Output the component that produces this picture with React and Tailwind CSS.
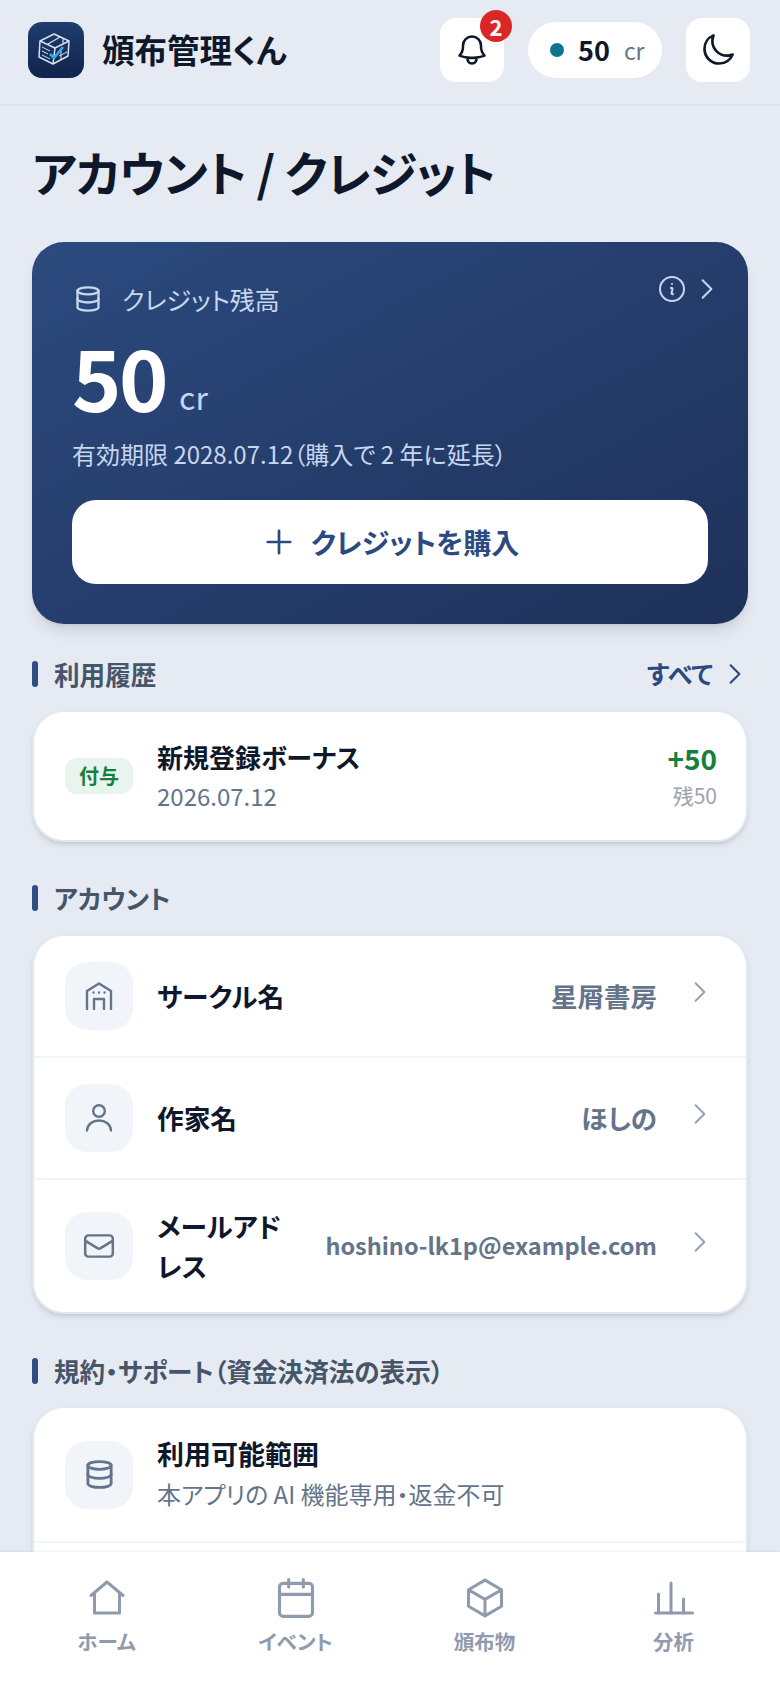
import React from "react";
import { Calendar, Database } from "lucide-react";
import {
  HiOutlineBell,
  HiOutlineMoon,
  HiOutlineInformationCircle,
  HiOutlineChevronRight,
  HiOutlinePlus,
  HiOutlineEnvelope,
  HiOutlineCube,
} from "react-icons/hi2";

const Logo = () => (
  <div className="w-14 h-14 rounded-[14px] bg-gradient-to-b from-[#1f3d6e] to-[#10244c] flex items-center justify-center shrink-0">
    <svg width="56" height="56" viewBox="0 0 56 56" fill="none" stroke="#d5e2f2" strokeWidth="1.5" strokeLinejoin="round">
      <path d="M12 19 L26 12 L41 19 L40 34 L25 42 L11 35 Z" />
      <path d="M12 19 L27 26 L41 19" />
      <path d="M27 26 L25 42" />
      <path d="M32 15 L20 22 M35 17 L35 21" strokeWidth="1.2" />
      <path d="M14 25 L22 29 M14 29 L20 32 M14 33 L22 37" strokeWidth="1" />
      <path d="M22 32 L26 36 L35 25" stroke="#38a9e8" strokeWidth="2.6" />
      <path d="M31 34 L39 30 M33 29 L33 38" strokeWidth="1" />
    </svg>
  </div>
);

const BuildingIcon = () => (
  <svg width="28" height="28" viewBox="0 0 28 28" fill="none" stroke="#64748b" strokeWidth="2.4" strokeLinecap="round" strokeLinejoin="round">
    <path d="M2 27 V9 L14 1.5 L26 9 V27" />
    <path d="M9 27 V17 H19 V27" />
    <path d="M8.5 10.5 h.01 M14 10.5 h.01 M19.5 10.5 h.01" />
  </svg>
);

const UserIcon = () => (
  <svg width="28" height="28" viewBox="0 0 28 28" fill="none" stroke="#64748b" strokeWidth="2.4" strokeLinecap="round">
    <circle cx="14" cy="7" r="5.8" />
    <path d="M2 26.5 C2.5 20 8 16.5 14 16.5 S25.5 20 26 26.5" />
  </svg>
);

const HomeIcon = () => (
  <svg width="36" height="36" viewBox="0 0 36 36" fill="none" stroke="#8f9bad" strokeWidth="3" strokeLinecap="round" strokeLinejoin="round">
    <path d="M2 15.5 L18 2 L34 15.5" />
    <path d="M5.5 13 V33 H30.5 V13" />
  </svg>
);

const ChartIcon = () => (
  <svg width="40" height="36" viewBox="0 0 40 36" fill="none" stroke="#8f9bad" strokeWidth="3" strokeLinecap="round">
    <path d="M1.5 33 H38.5" />
    <path d="M4.5 33 V14 M17 33 V3 M29.5 33 V19" />
  </svg>
);

const SectionTitle = ({ children, right }) => (
  <div className="flex items-center justify-between h-[26px]">
    <div className="flex items-center gap-4">
      <span className="w-[6px] h-[26px] rounded-full bg-[#2f4d80]" />
      <h2 className="text-[25.6px] leading-none font-bold text-[#475569]">{children}</h2>
    </div>
    {right}
  </div>
);

const SettingRow = ({ icon, label, value, small, last }) => (
  <div className={`flex items-center pl-[31px] pr-[32px] py-[26px] gap-6 ${last ? "" : "border-b-2 border-[#f1f5f9]"}`}>
    <div className="w-[68px] h-[68px] rounded-[22px] bg-[#f1f5f9] flex items-center justify-center shrink-0">{icon}</div>
    <span className="flex-1 min-w-0 text-[26.7px] leading-[40px] font-bold text-[#0f172a]">{label}</span>
    <span className={`${small ? "text-[23.5px]" : "text-[26.5px]"} font-semibold text-[#64748b] whitespace-nowrap`}>{value}</span>
    <HiOutlineChevronRight size={28} strokeWidth={1.7} className="text-[#94a3b8] -mt-2 shrink-0 ml-[5px]" />
  </div>
);

const NavItem = ({ icon, label }) => (
  <div className="flex flex-col items-center">
    <div className="h-[40px] flex items-center justify-center">{icon}</div>
    <span className="mt-2 text-[20.5px] leading-[30px] font-semibold text-[#8f9bad]">{label}</span>
  </div>
);

export default function App() {
  return (
    <div className="h-[1688px] flex flex-col overflow-hidden bg-[#e5eaf3] font-['Noto_Sans_CJK_JP','Noto_Sans',sans-serif] [font-feature-settings:'palt']">
      <header className="h-[106px] shrink-0 flex items-center justify-between pl-7 pr-[30px] pb-1 border-b-2 border-[#dde3ec]">
        <div className="flex items-center gap-[18px]">
          <Logo />
          <span className="text-[32.5px] font-bold text-[#0f172a] -mt-[2px]">頒布管理くん</span>
        </div>
        <div className="flex items-center gap-6">
          <div className="relative w-16 h-16 rounded-2xl bg-white flex items-center justify-center">
            <HiOutlineBell size={36} strokeWidth={1.7} className="text-[#0f172a]" />
            <span className="absolute -top-2 -right-2 w-8 h-8 rounded-full bg-[#dc2626] text-white text-[22px] leading-none font-bold flex items-center justify-center">2</span>
          </div>
          <div className="w-[134px] h-14 rounded-full bg-white flex items-center pl-[22px]">
            <span className="w-[14px] h-[14px] rounded-full bg-[#0e7490]" />
            <span className="ml-[14px] text-[27px] font-bold text-[#0f172a]">50</span>
            <span className="ml-[14px] text-[23px] text-[#64748b]">cr</span>
          </div>
          <div className="w-16 h-16 rounded-2xl bg-white flex items-center justify-center">
            <HiOutlineMoon size={36} strokeWidth={1.8} className="text-[#0f172a]" />
          </div>
        </div>
      </header>

      <main className="flex-1 overflow-hidden px-8">
        <h1 className="mt-[33px] text-[48px] leading-[64px] font-bold tracking-[-0.0175em] text-[#0f172a]">アカウント / クレジット</h1>

        <section className="relative mt-[39px] h-[382px] rounded-[32px] bg-gradient-to-br from-[#2c4a7f] to-[#1e3159] shadow-lg px-10 pt-[39px]">
          <div className="absolute top-[31px] right-[27px] flex items-center gap-[5px] text-[#c7d7ef]">
            <HiOutlineInformationCircle size={32} strokeWidth={1.5} />
            <HiOutlineChevronRight size={28} strokeWidth={1.7} />
          </div>
          <div className="flex items-center gap-5 text-[#c7d7ef]">
            <Database size={28} strokeWidth={2} className="ml-[2px]" />
            <span className="text-[25px] leading-[36px]">クレジット残高</span>
          </div>
          <div className="flex items-baseline mt-[9px]">
            <span className="text-[84px] leading-[100px] font-bold tracking-[-0.03em] text-white">50</span>
            <span className="ml-[13px] -translate-y-[2px] text-[32px] text-[#c7d7ef]">cr</span>
          </div>
          <p className="mt-[10px] text-[24px] leading-[36px] text-[#c7d7ef]">有効期限 2028.07.12（購入で 2 年に延長）</p>
          <button className="mt-7 w-full h-[84px] rounded-3xl bg-white flex items-center justify-center gap-[14px] text-[#2c4a7f] text-[28px] font-bold">
            <HiOutlinePlus size={36} strokeWidth={1.8} />
            クレジットを購入
          </button>
        </section>

        <div className="mt-[37px]">
          <SectionTitle right={
            <div className="flex items-center gap-2 text-[#2c4a7f] -mr-px">
              <span className="text-[25px] font-bold">すべて</span>
              <HiOutlineChevronRight size={28} strokeWidth={1.8} />
            </div>
          }>利用履歴</SectionTitle>
        </div>

        <div className="mt-[23px] h-[132px] rounded-[32px] bg-white border-2 border-[#e2e8f0] shadow-md flex items-center pl-[31px] pr-[29px]">
          <span className="w-[68px] h-[36px] rounded-xl bg-[#e8f5ee] flex items-center justify-center text-[20px] font-bold text-[#15803d]">付与</span>
          <div className="ml-6 flex-1 pb-[2px]">
            <p className="text-[26px] leading-[39px] font-bold text-[#0f172a]">新規登録ボーナス</p>
            <p className="mt-[2px] text-[24px] leading-[36px] text-[#64748b]">2026.07.12</p>
          </div>
          <div className="text-right pb-[3px]">
            <p className="text-[28px] leading-[40px] font-bold text-[#15803d]">+50</p>
            <p className="text-[21px] leading-[34px] text-[#9ca3af]">残50</p>
          </div>
        </div>

        <div className="mt-[43px]">
          <SectionTitle>アカウント</SectionTitle>
        </div>

        <div className="mt-[23px] rounded-[32px] bg-white border-2 border-[#e2e8f0] shadow-md overflow-hidden">
          <SettingRow icon={<BuildingIcon />} label="サークル名" value="星屑書房" />
          <SettingRow icon={<UserIcon />} label="作家名" value="ほしの" />
          <SettingRow icon={<HiOutlineEnvelope size={34} strokeWidth={1.75} className="text-[#64748b]" />} label="メールアドレス" value="hoshino-lk1p@example.com" small last />
        </div>

        <div className="mt-[44px]">
          <SectionTitle>規約・サポート（資金決済法の表示）</SectionTitle>
        </div>

        <div className="mt-[22px] rounded-[32px] bg-white border-2 border-[#e2e8f0] shadow-md">
          <div className="flex items-center pl-[31px] pr-[33px] py-6 gap-6 border-b-2 border-[#f1f5f9]">
            <div className="w-[68px] h-[68px] rounded-[22px] bg-[#f1f5f9] flex items-center justify-center shrink-0">
              <Database size={31} strokeWidth={2.2} className="text-[#64748b]" />
            </div>
            <div className="pt-[2px] pb-[3px]">
              <p className="text-[27px] leading-[40px] font-bold text-[#0f172a]">利用可能範囲</p>
              <p className="text-[24px] leading-[40px] text-[#64748b]">本アプリの AI 機能専用・返金不可</p>
            </div>
          </div>
          <div className="h-20" />
        </div>
      </main>

      <nav className="h-[136px] shrink-0 bg-white grid grid-cols-4 px-3 pt-[26px] shadow-[0_-1px_2px_rgba(15,23,42,0.06)] relative">
        <NavItem icon={<HomeIcon />} label="ホーム" />
        <NavItem icon={<Calendar size={44} strokeWidth={1.7} className="text-[#8f9bad]" />} label="イベント" />
        <NavItem icon={<HiOutlineCube size={44} strokeWidth={1.65} className="text-[#8f9bad]" />} label="頒布物" />
        <NavItem icon={<ChartIcon />} label="分析" />
      </nav>
    </div>
  );
}
